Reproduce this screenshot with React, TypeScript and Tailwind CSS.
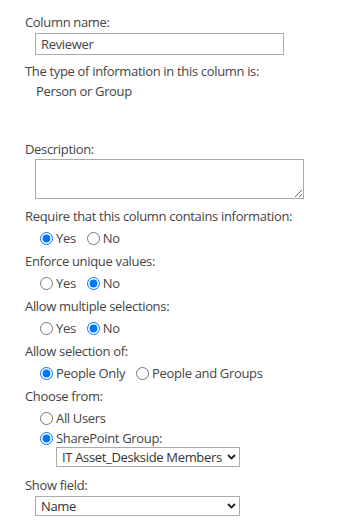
import React from "react";

// ---------------------------------------------------------------------------
// Small building blocks
// ---------------------------------------------------------------------------

function Label({ children, className = "" }: { children: React.ReactNode; className?: string }) {
  return <div className={"h-[22px] leading-[22px] " + className}>{children}</div>;
}

function Radio({ name, label, checked }: { name: string; label: string; checked?: boolean }) {
  return (
    <label className="flex items-center">
      <input
        type="radio"
        name={name}
        defaultChecked={checked}
        className="m-0 w-[13px] h-[13px] accent-[#0075ff]"
      />
      <span className="ml-[3px]">{label}</span>
    </label>
  );
}

function RadioRow({ name, options, value }: { name: string; options: string[]; value: string }) {
  return (
    <div className="h-[23px] flex items-center gap-[11px] pl-[15px]">
      {options.map((o) => (
        <Radio key={o} name={name} label={o} checked={o === value} />
      ))}
    </div>
  );
}

function Chevron() {
  return (
    <svg
      width="9"
      height="6"
      viewBox="0 0 9 6"
      className="absolute right-[4px] top-1/2 -translate-y-1/2 pointer-events-none"
    >
      <path d="M1 1l3.5 3.5L8 1" fill="none" stroke="#222" strokeWidth="1.8" />
    </svg>
  );
}

function Select({ value, className }: { value: string; className: string }) {
  return (
    <div className={"relative " + className}>
      <select
        defaultValue={value}
        className="appearance-none w-full h-full border border-[#ababab] bg-white pl-[5px] pr-[14px] text-[#333] outline-none"
      >
        <option>{value}</option>
      </select>
      <Chevron />
    </div>
  );
}

// ---------------------------------------------------------------------------
// Main
// ---------------------------------------------------------------------------

export default function App() {
  return (
    <div
      className="w-[340px] h-[521px] bg-white text-[13px] tracking-[-0.33px] text-[#444] pt-[11px] pl-[25px] overflow-hidden"
      style={{ fontFamily: '"Open Sans", sans-serif' }}
    >
      <Label>Column name:</Label>
      <input
        defaultValue="Reviewer"
        className="block ml-[10px] w-[249px] h-[22px] border border-[#ababab] px-[5px] text-[#444] outline-none"
      />

      <div className="mt-[6px] h-[20px] leading-[20px]">The type of information in this column is:</div>
      <div className="h-[20px] leading-[20px] pl-[11px]">Person or Group</div>

      <div className="mt-[38px] h-[20px] leading-[20px]">Description:</div>
      <textarea className="block ml-[10px] w-[269px] h-[40px] border border-[#ababab] outline-none" />

      <Label className="mt-[6px]">Require that this column contains information:</Label>
      <RadioRow name="req" options={["Yes", "No"]} value="Yes" />

      <Label>Enforce unique values:</Label>
      <RadioRow name="uniq" options={["Yes", "No"]} value="No" />

      <Label>Allow multiple selections:</Label>
      <RadioRow name="multi" options={["Yes", "No"]} value="No" />

      <Label>Allow selection of:</Label>
      <RadioRow name="sel" options={["People Only", "People and Groups"]} value="People Only" />

      <Label>Choose from:</Label>
      <div className="h-[23px] flex items-center pl-[15px]">
        <Radio name="from" label="All Users" />
      </div>
      <div className="h-[17px] flex items-center pl-[15px]">
        <Radio name="from" label="SharePoint Group:" checked />
      </div>
      <Select value="IT Asset_Deskside Members" className="ml-[31px] w-[184px] h-[20px]" />

      <div className="mt-[8px] h-[20px] leading-[20px]">Show field:</div>
      <Select value="Name" className="ml-[10px] mt-[1px] w-[205px] h-[20px]" />
    </div>
  );
}
